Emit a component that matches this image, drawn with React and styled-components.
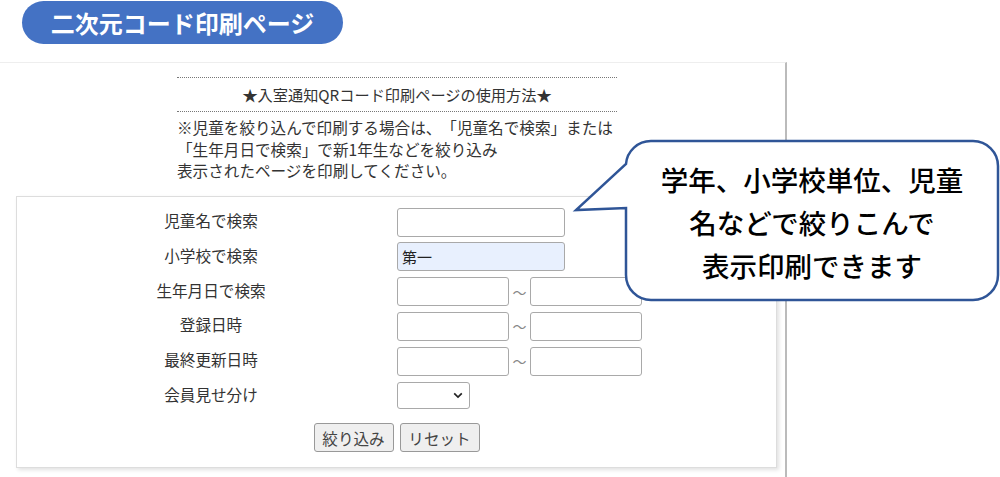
import styled, { createGlobalStyle } from "styled-components";
import React from "react";

const GlobalStyle = createGlobalStyle`
  html, body {
    margin: 0;
    padding: 0;
    background: #fff;
  }
  body {
    font-family: "Noto Sans CJK JP", "Noto Sans", sans-serif;
    color: #333;
    text-spacing-trim: space-all;
  }
`;

export default function App() {
  const rows = [
    { label: "児童名で検索", kind: "text" },
    { label: "小学校で検索", kind: "text", value: "第一", filled: true },
    { label: "生年月日で検索", kind: "range" },
    { label: "登録日時", kind: "range" },
    { label: "最終更新日時", kind: "range" },
    { label: "会員見せ分け", kind: "select" },
  ];

  return (
    <Page>
      <GlobalStyle />
      <Header>
        <TitlePill>二次元コード印刷ページ</TitlePill>
      </Header>
      <Panel>
        <Guide>
          <GuideTitle>★入室通知QRコード印刷ページの使用方法★</GuideTitle>
          <GuideText>
            ※児童を絞り込んで印刷する場合は、「児童名で検索」または
            <br />
            「生年月日で検索」で新1年生などを絞り込み
            <br />
            表示されたページを印刷してください。
          </GuideText>
        </Guide>
        <FormBox>
          <FormGrid>
            {rows.map((row) => (
              <React.Fragment key={row.label}>
                <Label>{row.label}</Label>
                <Field>
                  {row.kind === "text" && (
                    <TextInput
                      $width={168}
                      $filled={row.filled}
                      defaultValue={row.value || ""}
                    />
                  )}
                  {row.kind === "range" && (
                    <>
                      <TextInput $width={112} />
                      <Tilde>～</Tilde>
                      <TextInput $width={112} />
                    </>
                  )}
                  {row.kind === "select" && (
                    <SelectBox>
                      <svg width="10" height="7" viewBox="0 0 10 7">
                        <path
                          d="M1.2 1.4 L5 5 L8.8 1.4"
                          fill="none"
                          stroke="#222"
                          strokeWidth="1.7"
                        />
                      </svg>
                    </SelectBox>
                  )}
                </Field>
              </React.Fragment>
            ))}
          </FormGrid>
          <Buttons>
            <Button>絞り込み</Button>
            <Button>リセット</Button>
          </Buttons>
        </FormBox>
      </Panel>

      <Callout>
        <svg
          width="432"
          height="170"
          viewBox="570 135 432 170"
          style={{ position: "absolute", left: 0, top: 0 }}
        >
          <path
            d="M651 141 H973 A25 25 0 0 1 998 166 V275 A25 25 0 0 1 973 300 H651 A25 25 0 0 1 626 275 V208 L576 210 L626 164 A25 25 0 0 1 651 141 Z"
            fill="#fff"
            stroke="#2F5597"
            strokeWidth="2.5"
            strokeLinejoin="miter"
          />
        </svg>
        <CalloutText>
          学年、小学校単位、児童
          <br />
          名などで絞りこんで
          <br />
          表示印刷できます
        </CalloutText>
      </Callout>
    </Page>
  );
}

const Page = styled.div`
  position: relative;
  width: 1000px;
  height: 477px;
  overflow: hidden;
`;

const Header = styled.div`
  height: 62px;
  padding: 1px 0 0 22px;
  box-sizing: border-box;
`;

const TitlePill = styled.div`
  display: inline-flex;
  align-items: center;
  justify-content: center;
  width: 321px;
  height: 43px;
  border-radius: 22px;
  background: #4472c4;
  color: #fff;
  font-size: 24px;
  font-weight: 700;
`;

const Panel = styled.div`
  width: 787px;
  height: 415px;
  border-top: 1px solid #eeeeee;
  border-right: 2px solid #bbbbbb;
  box-sizing: border-box;
  padding: 14px 0 0 16px;
`;

const Guide = styled.div`
  width: 440px;
  margin-left: 161px;
  font-size: 15.6px;
  color: #333;
`;

const GuideTitle = styled.div`
  border-top: 1px dotted #777;
  border-bottom: 1px dotted #777;
  text-align: center;
  height: 33px;
  line-height: 33px;
  font-size: 15.2px;
`;

const GuideText = styled.div`
  line-height: 21.5px;
  padding-top: 5px;
  white-space: nowrap;
`;

const FormBox = styled.div`
  margin-top: 14px;
  width: 761px;
  height: 272px;
  box-sizing: border-box;
  border: 1px solid #dddddd;
  box-shadow: 2px 2px 4px rgba(0, 0, 0, 0.12);
  padding: 11px 0 0 14px;
`;

const FormGrid = styled.div`
  display: grid;
  grid-template-columns: 360px auto;
  column-gap: 6px;
  row-gap: 5.8px;
  align-items: center;
`;

const Label = styled.div`
  text-align: center;
  font-size: 15.6px;
  color: #333;
  padding-bottom: 4px;
`;

const Field = styled.div`
  display: flex;
  align-items: center;
  height: 29px;
`;

const TextInput = styled.input`
  box-sizing: border-box;
  width: ${(p) => p.$width}px;
  height: 29px;
  border: 1px solid #a9a9a9;
  border-radius: 3px;
  background: ${(p) => (p.$filled ? "#e8f0fe" : "#fff")};
  font-family: "Noto Sans CJK JP", sans-serif;
  font-size: 15px;
  color: #222;
  padding: 0 4px;
  outline: none;
`;

const Tilde = styled.span`
  width: 21px;
  text-align: center;
  font-size: 14px;
  color: #888;
`;

const SelectBox = styled.div`
  box-sizing: border-box;
  width: 73px;
  height: 27px;
  border: 1px solid #a9a9a9;
  border-radius: 3px;
  background: #fff;
  display: flex;
  align-items: center;
  justify-content: flex-end;
  padding-right: 6px;
`;

const Buttons = styled.div`
  display: flex;
  justify-content: center;
  gap: 6px;
  margin-top: 13px;
  padding-right: 14px;
`;

const Button = styled.button`
  box-sizing: border-box;
  width: 80px;
  height: 29px;
  border: 1px solid #999;
  border-radius: 3px;
  background: #efefef;
  font-family: "Noto Sans CJK JP", sans-serif;
  font-size: 15.6px;
  color: #444;
  padding: 0;
`;

const Callout = styled.div`
  position: absolute;
  left: 570px;
  top: 135px;
  width: 432px;
  height: 170px;
`;

const CalloutText = styled.div`
  position: absolute;
  left: 56px;
  top: 6px;
  width: 372px;
  height: 160px;
  display: flex;
  align-items: center;
  justify-content: center;
  text-align: center;
  padding-top: 3px;
  box-sizing: border-box;
  font-size: 27.5px;
  line-height: 43px;
  font-weight: 500;
  color: #000;
`;
